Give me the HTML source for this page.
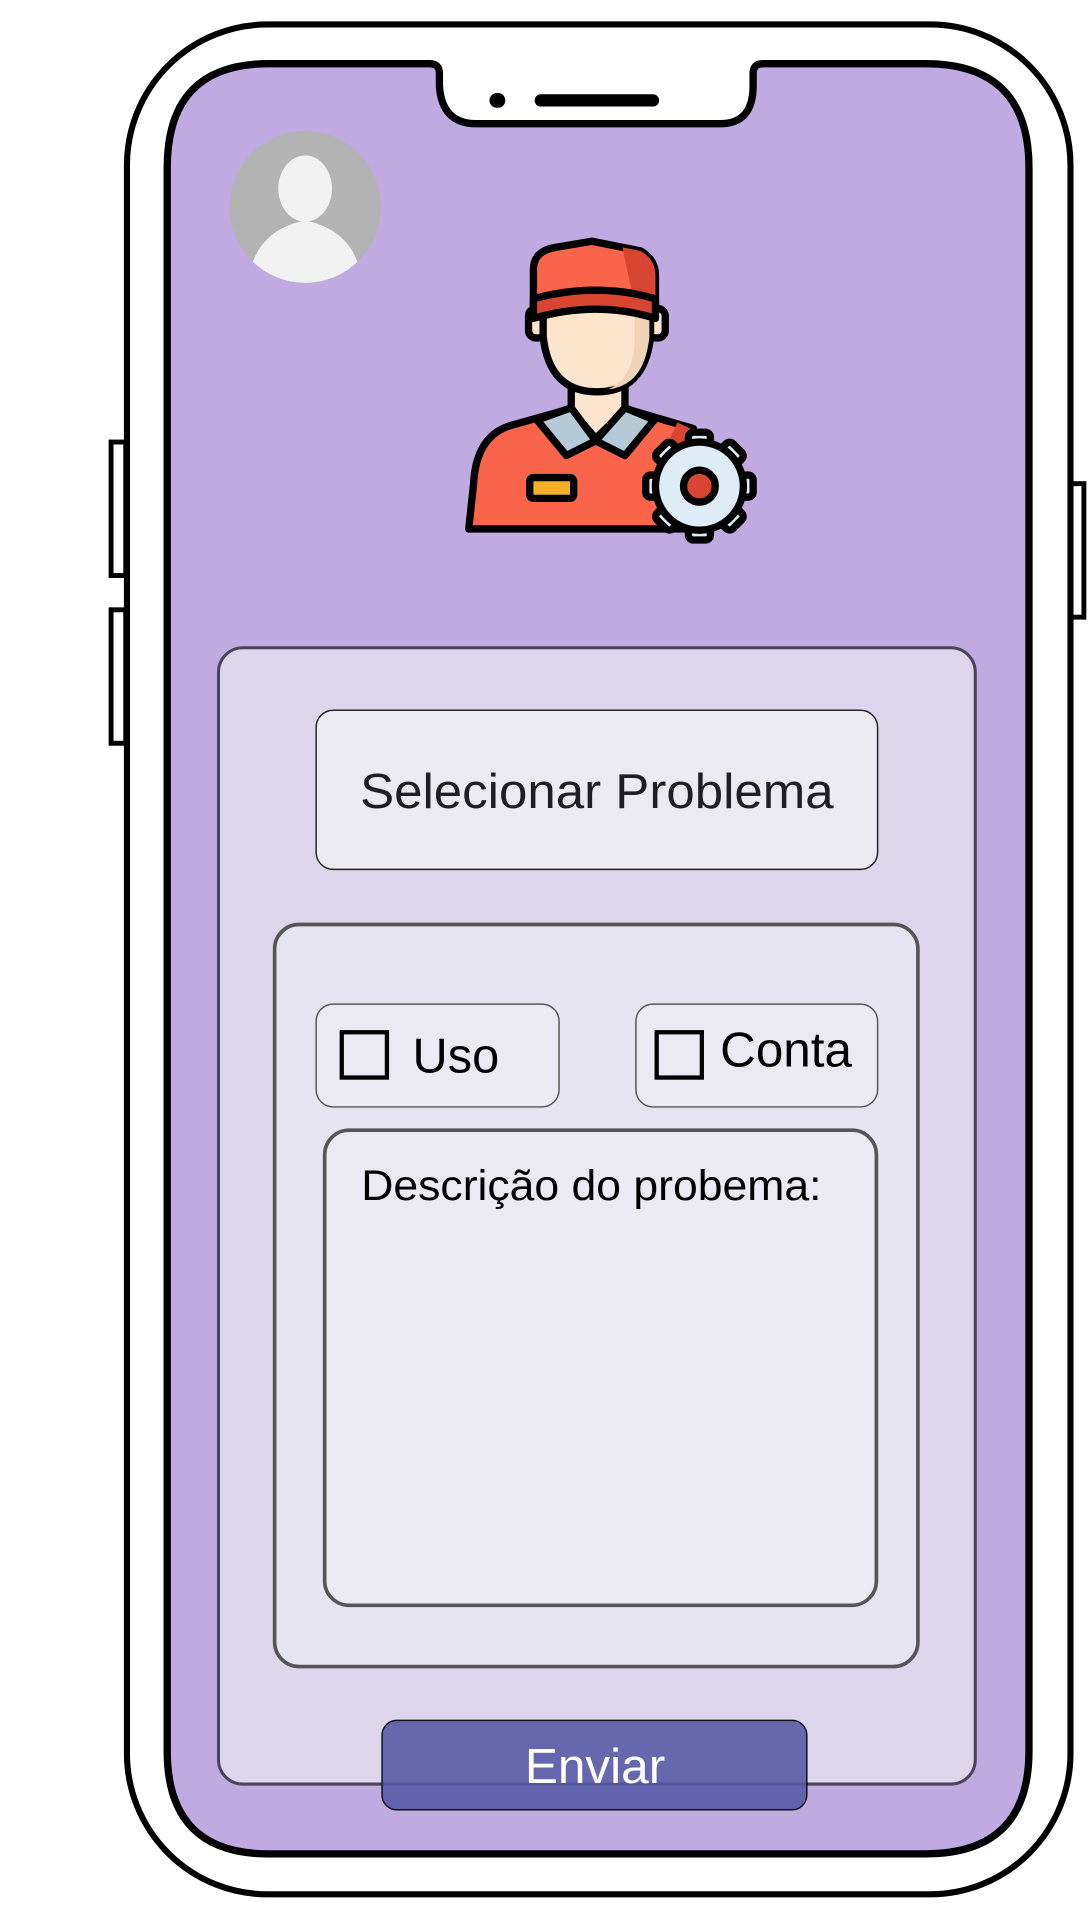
<!DOCTYPE html>
<html><head><meta charset="utf-8"><style>
html,body{margin:0;padding:0;background:#fff;width:1090px;height:1920px;overflow:hidden}
svg{display:block}
text{font-family:"Liberation Sans","DejaVu Sans",sans-serif}
</style></head><body>
<svg width="1090" height="1920" viewBox="0 0 893 1568" preserveAspectRatio="none" xmlns="http://www.w3.org/2000/svg">
<rect width="893" height="1568" fill="#fff"/>
<rect x="91" y="361" width="12" height="109" fill="#fff" stroke="#000" stroke-width="4"/>
<rect x="91" y="498" width="12" height="109" fill="#fff" stroke="#000" stroke-width="4"/>
<rect x="877" y="395" width="11" height="109" fill="#fff" stroke="#000" stroke-width="4"/>
<rect x="104" y="20" width="773" height="1527" rx="115" fill="#fff" stroke="#000" stroke-width="5"/>
<path d="M220 52 H352 Q360 52 360 60 V70 Q362 101 390 101 H590 Q617 101 617 70 V60 Q617 52 625 52 H758 Q843 52 843 137 V1430 Q843 1514 758 1514 H220 Q137 1514 137 1430 V137 Q137 52 220 52 Z" fill="#bfaae2" stroke="#000" stroke-width="6"/>
<rect x="401" y="76" width="13" height="12" rx="6" fill="#000"/>
<rect x="438" y="77" width="102" height="10" rx="5" fill="#000"/>
<circle cx="250" cy="169" r="62" fill="#b3b3b3"/>
<clipPath id="av"><circle cx="250" cy="169" r="62"/></clipPath>
<g clip-path="url(#av)">
<ellipse cx="250" cy="154" rx="22" ry="27" fill="#f1f1f1"/>
<path d="M203 240 Q203 190 250 180 Q297 190 297 240 Z" fill="#f1f1f1"/>
</g>
<g stroke="#000" stroke-width="6" stroke-linejoin="round" stroke-linecap="round">
<path d="M384 432 L388 395 Q390 355 420 347 L470 333 L510 333 L568 350 L575 432 Z" fill="#f9644a"/>
<path d="M555 345 L572 353 L570 380 L548 360 Z" fill="#d84632" stroke="none"/>
<path d="M468 300 V335 L488 358 L512 335 V300 Z" fill="#fde5cd"/>
<path d="M440 343 L468 333 L488 360 L464 372 Z" fill="#b5cad6"/>
<path d="M536 343 L512 333 L488 360 L512 372 Z" fill="#b5cad6"/>
<rect x="434" y="390" width="36" height="17" rx="3" fill="#f4b128"/>
<rect x="433" y="252" width="14" height="24" rx="6" fill="#fde5cd"/>
<rect x="531" y="252" width="14" height="24" rx="6" fill="#fde5cd"/>
<path d="M445 245 V275 Q450 320 489 320 Q528 320 533 275 V245 Z" fill="#fde5cd"/>
<path d="M520 250 V280 Q518 310 498 318 Q528 315 532 275 V250 Z" fill="#eed3b6" stroke="none"/>
<path d="M437 250 V220 Q437 205 455 202 L485 197 L525 205 Q537 212 537 225 V250 Z" fill="#f9644a"/>
<path d="M510 202 L525 205 Q537 212 537 225 V250 L520 250 Z" fill="#d84632" stroke="none"/>
<path d="M437 260 V244 Q489 230 537 244 V260 Q489 245 437 260 Z" fill="#d84632"/>
<g transform="translate(573 397)" fill="#deecf6">
<g id="t"><rect x="-9" y="-44" width="18" height="16" rx="4"/></g>
<use href="#t" transform="rotate(45)"/><use href="#t" transform="rotate(90)"/><use href="#t" transform="rotate(135)"/>
<use href="#t" transform="rotate(180)"/><use href="#t" transform="rotate(225)"/><use href="#t" transform="rotate(270)"/><use href="#t" transform="rotate(315)"/>
<circle r="36"/>
<circle r="13" fill="#d84632"/>
</g>
</g>
<rect x="179" y="529" width="620" height="928" rx="20" fill="#ddd5ec" stroke="#4a4458" stroke-width="2.5"/>
<rect x="259" y="580" width="460" height="130" rx="14" fill="#eaeaf0" stroke="#222" stroke-width="1.2"/>
<text x="295" y="660" font-size="40" textLength="388" lengthAdjust="spacingAndGlyphs" fill="#1e1e24">Selecionar Problema</text>
<rect x="225" y="755" width="527" height="606" rx="20" fill="#e6e4f0" stroke="#555" stroke-width="3"/>
<rect x="259" y="820" width="199" height="84" rx="14" fill="#ebe9f1" stroke="#555" stroke-width="1.2"/>
<rect x="280" y="843" width="37" height="37" fill="none" stroke="#000" stroke-width="3.5"/>
<text x="338" y="876" font-size="40" textLength="71" lengthAdjust="spacingAndGlyphs" fill="#000">Uso</text>
<rect x="521" y="820" width="198" height="84" rx="14" fill="#ebe9f1" stroke="#555" stroke-width="1.2"/>
<rect x="538" y="843" width="37" height="37" fill="none" stroke="#000" stroke-width="3.5"/>
<text x="590" y="871" font-size="40" textLength="108" lengthAdjust="spacingAndGlyphs" fill="#000">Conta</text>
<rect x="266" y="923" width="452" height="388" rx="20" fill="#ebe9f1" stroke="#555" stroke-width="3"/>
<text x="296" y="980" font-size="35" textLength="377" lengthAdjust="spacingAndGlyphs" fill="#000">Descrição do probema:</text>
<rect x="313" y="1405" width="348" height="73" rx="12" fill="#5658a4" fill-opacity="0.88" stroke="#111" stroke-width="1.2"/>
<text x="430" y="1456" font-size="40" textLength="115" lengthAdjust="spacingAndGlyphs" fill="#fff">Enviar</text>
</svg>
</body></html>
